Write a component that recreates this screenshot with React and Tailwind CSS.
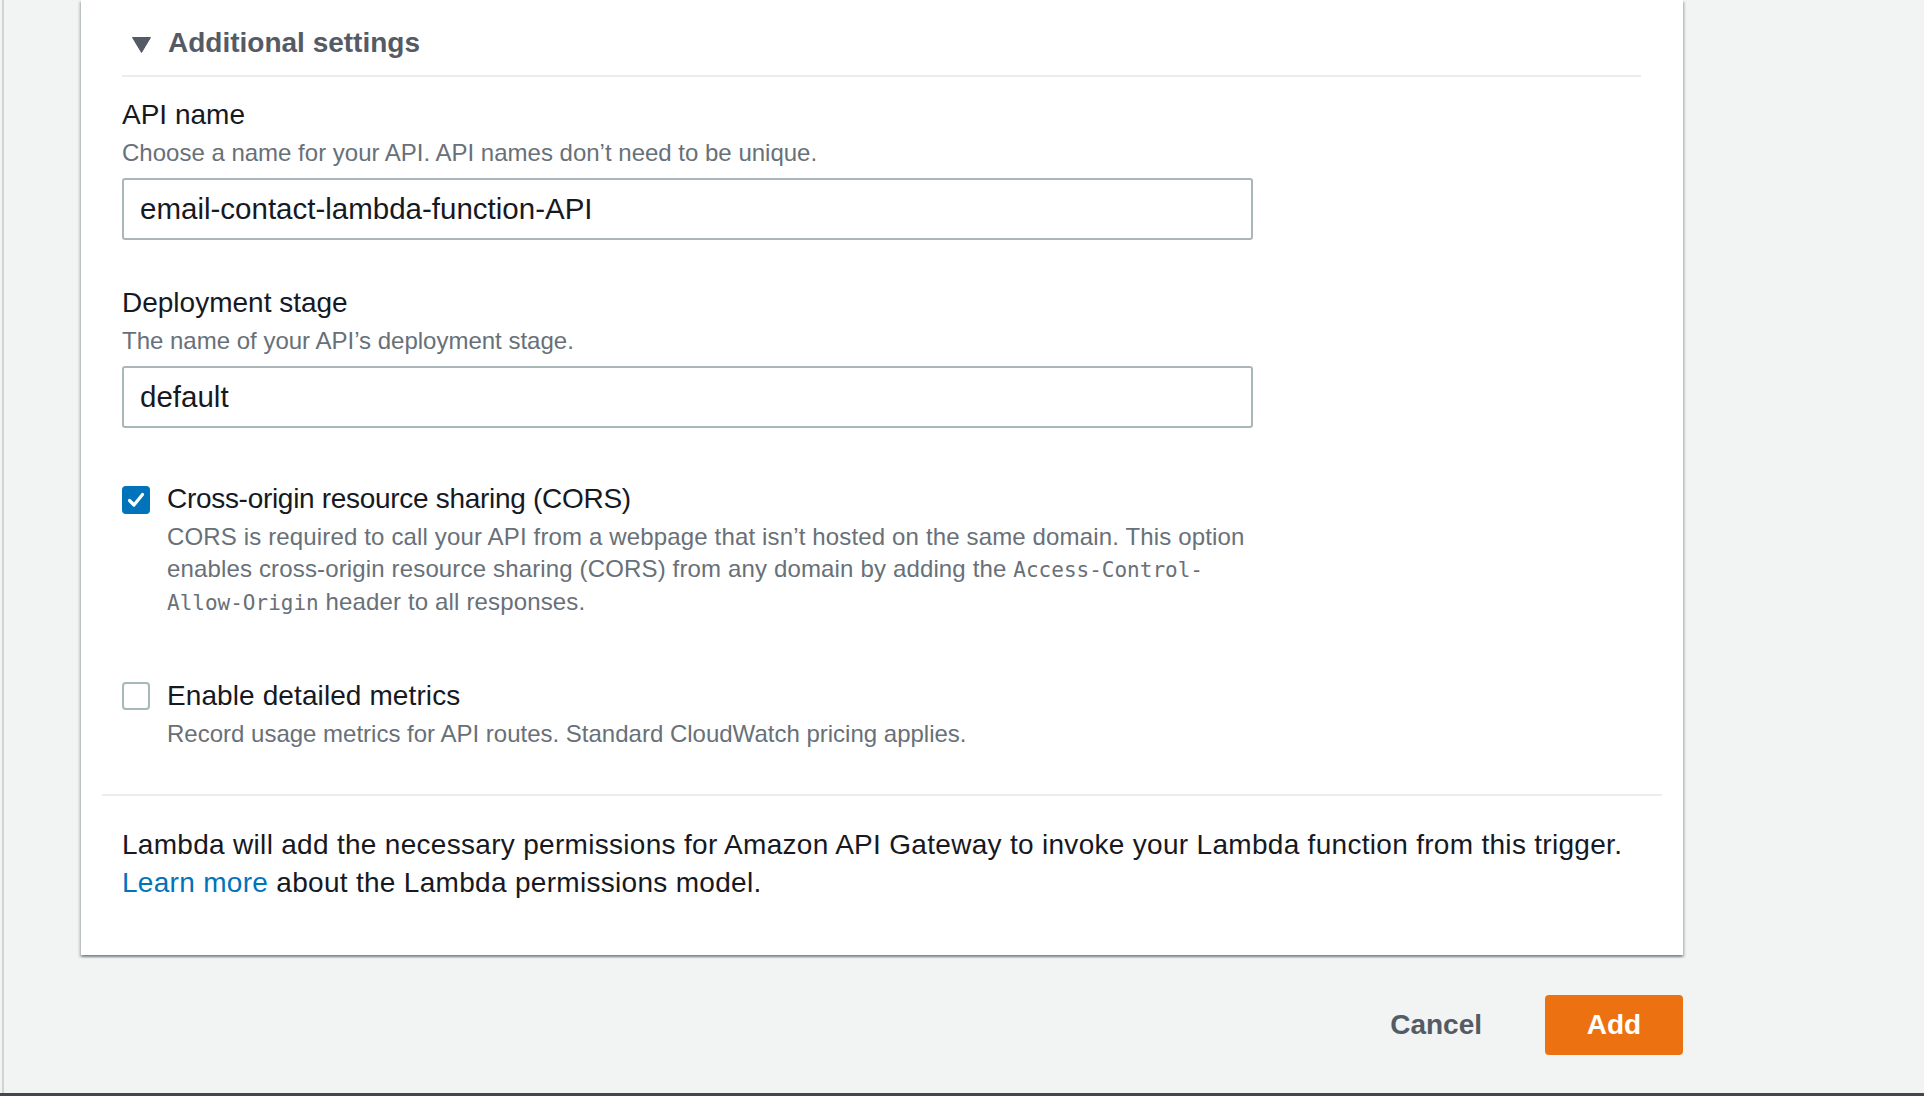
import React from "react";

function Checkbox({ checked }) {
  if (checked) {
    return (
      <div className="w-[28px] h-[28px] rounded-[4px] bg-[#0073bb] flex items-center justify-center shrink-0">
        <svg width="20" height="20" viewBox="0 0 20 20">
          <polyline
            points="3.5,10.5 8,15 16.5,4.5"
            fill="none"
            stroke="white"
            strokeWidth="3.2"
            strokeLinecap="round"
            strokeLinejoin="round"
          />
        </svg>
      </div>
    );
  }
  return (
    <div className="w-[28px] h-[28px] rounded-[4px] border-2 border-[#aab7b8] bg-white shrink-0" />
  );
}

function Field({ label, description, value, top }) {
  return (
    <div className={top}>
      <div className="text-[28px] leading-[38px] text-[#16191f]">{label}</div>
      <div className="mt-[3px] text-[24px] leading-[32px] text-[#687078]">
        {description}
      </div>
      <div className="mt-[9px] w-[1131px] h-[62px] border-2 border-[#aab7b8] rounded-[3px] bg-white pl-[16px] text-[29.5px] leading-[58px] text-[#16191f]">
        {value}
      </div>
    </div>
  );
}

export default function App() {
  return (
    <div className="font-['Liberation_Sans',Arial,sans-serif] w-full h-[1109px] bg-white overflow-hidden">
      <div className="h-[1093px] bg-[#f2f3f3] pl-[2px] overflow-hidden">
        <div className="h-full border-l-2 border-[#cfd4d4] pl-[77px]">
          <div className="w-[1602px] bg-white pl-[41px] pr-[42px] pt-[24px] pb-[53px] shadow-[0_2px_2px_0_rgba(0,28,36,0.3),2px_2px_2px_0_rgba(0,28,36,0.15),-2px_2px_2px_0_rgba(0,28,36,0.15)]">
            {/* header */}
            <div className="h-[38px] flex items-center pl-[10px]">
              <svg width="19" height="16" viewBox="0 0 19 16" className="mt-[4px]">
                <polygon points="0.5,0.5 18.5,0.5 9.5,15.5" fill="#545b64" strokeLinejoin="round" stroke="#545b64" strokeWidth="1" />
              </svg>
              <span className="ml-[17px] text-[28px] font-bold text-[#545b64]">
                Additional settings
              </span>
            </div>
            <div className="mt-[13px] h-[2px] bg-[#eaeded]" />

            <Field
              top="mt-[19px]"
              label="API name"
              description="Choose a name for your API. API names don’t need to be unique."
              value="email-contact-lambda-function-API"
            />
            <Field
              top="mt-[44px]"
              label="Deployment stage"
              description="The name of your API’s deployment stage."
              value="default"
            />

            {/* CORS */}
            <div className="mt-[52px] flex items-start">
              <div className="mt-[6px]">
                <Checkbox checked />
              </div>
              <div className="ml-[17px]">
                <div className="text-[28px] leading-[38px] tracking-[-0.3px] text-[#16191f]">
                  Cross-origin resource sharing (CORS)
                </div>
                <div className="mt-[3px] text-[24px] leading-[32px] tracking-[0.15px] text-[#687078]">
                  CORS is required to call your API from a webpage that isn’t hosted on the same domain. This option
                  <br />
                  enables cross-origin resource sharing (CORS) from any domain by adding the{" "}
                  <code className="font-['DejaVu_Sans_Mono',monospace] text-[21px] tracking-normal">Access-Control-</code>
                  <br />
                  <code className="font-['DejaVu_Sans_Mono',monospace] text-[21px] tracking-normal">Allow-Origin</code> header to all responses.
                </div>
              </div>
            </div>

            {/* metrics */}
            <div className="mt-[58px] flex items-start">
              <div className="mt-[5px]">
                <Checkbox />
              </div>
              <div className="ml-[17px]">
                <div className="text-[28px] leading-[38px] tracking-[0.1px] text-[#16191f]">
                  Enable detailed metrics
                </div>
                <div className="mt-[3px] text-[24px] leading-[32px] text-[#687078]">
                  Record usage metrics for API routes. Standard CloudWatch pricing applies.
                </div>
              </div>
            </div>

            <div className="mt-[44px] -ml-[20px] -mr-[21px] h-[2px] bg-[#eaeded]" />

            <p className="mt-[30px] text-[28px] leading-[38px] tracking-[0.3px] text-[#16191f]">
              Lambda will add the necessary permissions for Amazon API Gateway to invoke your Lambda function from this trigger.
              <br />
              <a className="text-[#0073bb]">Learn more</a> about the Lambda permissions model.
            </p>
          </div>

          <div className="w-[1602px] mt-[40px] flex justify-end items-center">
            <button className="mr-[63px] text-[28px] font-bold text-[#545b64]">Cancel</button>
            <button className="w-[138px] h-[60px] rounded-[4px] bg-[#ec7211] text-[28px] font-bold text-white">
              Add
            </button>
          </div>
        </div>
      </div>
      <div className="h-[3px] bg-[#414750]" />
    </div>
  );
}
